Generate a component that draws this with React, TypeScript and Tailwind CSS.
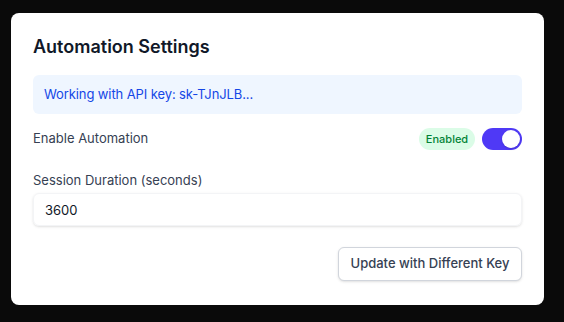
import React, { useState } from 'react';

const App: React.FC = () => {
  const [enabled, setEnabled] = useState(true);
  const [duration, setDuration] = useState('3600');

  return (
    <div
      className="min-h-[322px] w-full bg-[#0a0a0a] pl-[11px] pt-[13px]"
      style={{ fontFamily: 'Inter, "Noto Sans", sans-serif' }}
    >
      <div className="flex h-[292px] w-[533px] flex-col rounded-lg bg-white px-[22px] pt-[20px]">
        <h2 className="text-lg leading-7 font-semibold text-gray-900">Automation Settings</h2>

        <div className="mt-[14px] flex h-[39px] items-center rounded-md bg-blue-50 px-[11px] text-[13px] tracking-[-0.1px] text-blue-700">
          Working with API key: sk-TJnJLB...
        </div>

        <div className="mt-[14px] flex h-[22px] items-center justify-between">
          <span className="text-[13px] text-gray-700">Enable Automation</span>
          <div className="flex items-center gap-[7px]">
            <span className="flex h-[22px] w-[56px] items-center justify-center rounded-full bg-green-100 text-[11px] font-medium text-green-700">
              {enabled ? 'Enabled' : 'Disabled'}
            </span>
            <button
              onClick={() => setEnabled(!enabled)}
              className={`flex h-[22px] w-[40px] items-center rounded-full p-[2px] ${
                enabled ? 'justify-end bg-indigo-600' : 'justify-start bg-gray-300'
              }`}
            >
              <span className="h-[18px] w-[18px] rounded-full bg-white shadow-sm" />
            </button>
          </div>
        </div>

        <label className="mt-[20px] text-[13px] leading-5 text-gray-700">Session Duration (seconds)</label>
        <input
          value={duration}
          onChange={(e) => setDuration(e.target.value)}
          className="mt-[3px] h-[33px] w-full rounded-md border border-gray-100 px-[11px] text-[13px] text-gray-900 shadow-sm outline-none"
        />

        <div className="mt-[21px] flex justify-end">
          <button className="h-[34px] w-[184px] rounded-md border border-gray-300 bg-white text-[13px] font-medium text-gray-700 shadow-sm">
            Update with Different Key
          </button>
        </div>
      </div>
    </div>
  );
};

export default App;
